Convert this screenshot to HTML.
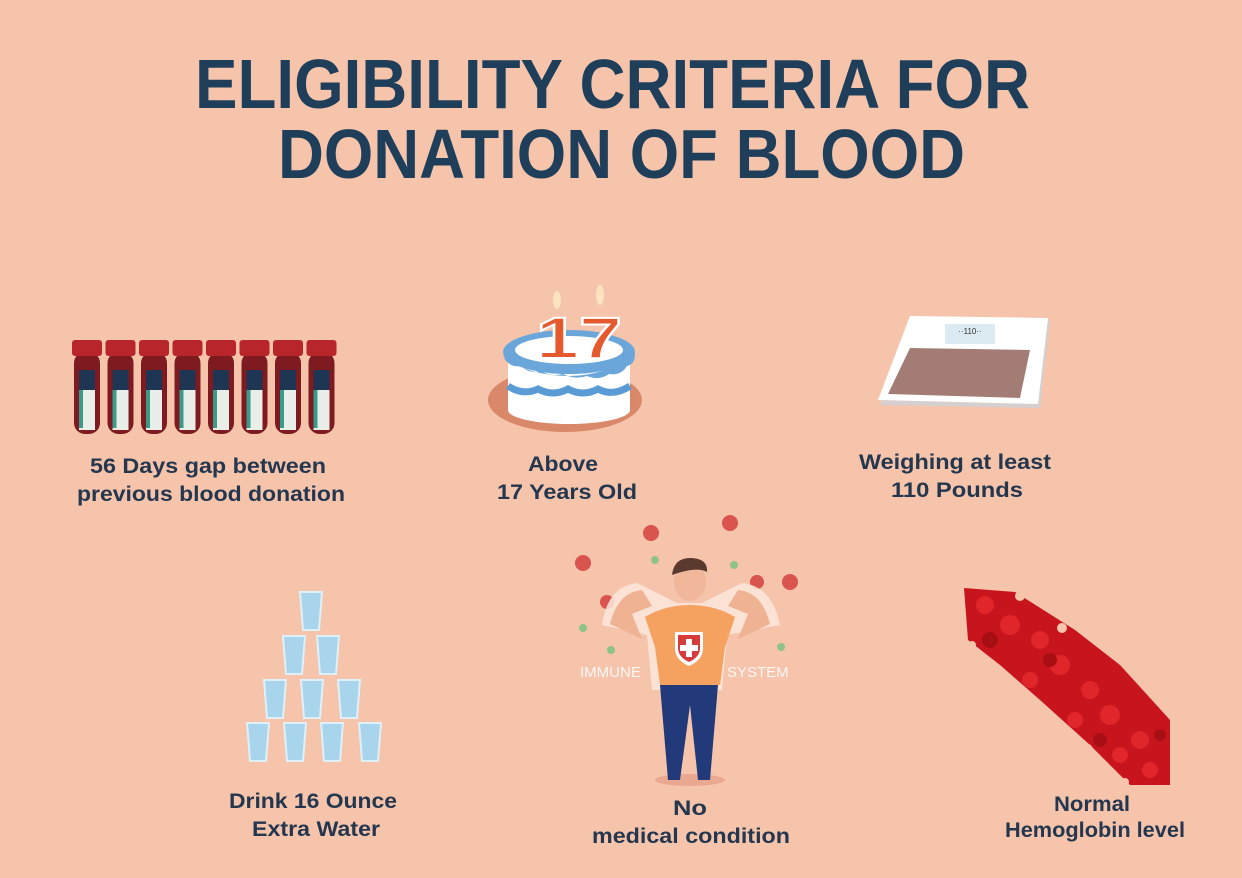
<!DOCTYPE html>
<html><head><meta charset="utf-8"><style>
html,body{margin:0;padding:0;background:#f5c4ab;}
svg{display:block}
.t{font-family:"Liberation Sans",sans-serif;font-weight:bold;fill:#1f3e5a}
.l{font-family:"Liberation Sans",sans-serif;font-weight:bold;fill:#24374f;font-size:21px}
</style></head><body>
<svg width="1242" height="878" viewBox="0 0 1242 878" xmlns="http://www.w3.org/2000/svg">
<rect width="1242" height="878" fill="#f5c4ab"/>
<text class="t" x="195" y="108" font-size="70" textLength="835" lengthAdjust="spacingAndGlyphs">ELIGIBILITY CRITERIA FOR</text>
<text class="t" x="278" y="178" font-size="70" textLength="687" lengthAdjust="spacingAndGlyphs">DONATION OF BLOOD</text>

<g id="tubes">
<g transform="translate(72,0)"><rect x="2" y="352" width="26" height="82" rx="11" fill="#7e1b20"/><rect x="0" y="340" width="30" height="16" rx="3" fill="#b8262b"/><rect x="7" y="370" width="16" height="60" fill="#e9eee8"/><rect x="7" y="370" width="16" height="20" fill="#1e3554"/><rect x="7" y="390" width="4" height="38" fill="#3a9b88"/></g>
<g transform="translate(105.5,0)"><rect x="2" y="352" width="26" height="82" rx="11" fill="#7e1b20"/><rect x="0" y="340" width="30" height="16" rx="3" fill="#b8262b"/><rect x="7" y="370" width="16" height="60" fill="#e9eee8"/><rect x="7" y="370" width="16" height="20" fill="#1e3554"/><rect x="7" y="390" width="4" height="38" fill="#3a9b88"/></g>
<g transform="translate(139,0)"><rect x="2" y="352" width="26" height="82" rx="11" fill="#7e1b20"/><rect x="0" y="340" width="30" height="16" rx="3" fill="#b8262b"/><rect x="7" y="370" width="16" height="60" fill="#e9eee8"/><rect x="7" y="370" width="16" height="20" fill="#1e3554"/><rect x="7" y="390" width="4" height="38" fill="#3a9b88"/></g>
<g transform="translate(172.5,0)"><rect x="2" y="352" width="26" height="82" rx="11" fill="#7e1b20"/><rect x="0" y="340" width="30" height="16" rx="3" fill="#b8262b"/><rect x="7" y="370" width="16" height="60" fill="#e9eee8"/><rect x="7" y="370" width="16" height="20" fill="#1e3554"/><rect x="7" y="390" width="4" height="38" fill="#3a9b88"/></g>
<g transform="translate(206,0)"><rect x="2" y="352" width="26" height="82" rx="11" fill="#7e1b20"/><rect x="0" y="340" width="30" height="16" rx="3" fill="#b8262b"/><rect x="7" y="370" width="16" height="60" fill="#e9eee8"/><rect x="7" y="370" width="16" height="20" fill="#1e3554"/><rect x="7" y="390" width="4" height="38" fill="#3a9b88"/></g>
<g transform="translate(239.5,0)"><rect x="2" y="352" width="26" height="82" rx="11" fill="#7e1b20"/><rect x="0" y="340" width="30" height="16" rx="3" fill="#b8262b"/><rect x="7" y="370" width="16" height="60" fill="#e9eee8"/><rect x="7" y="370" width="16" height="20" fill="#1e3554"/><rect x="7" y="390" width="4" height="38" fill="#3a9b88"/></g>
<g transform="translate(273,0)"><rect x="2" y="352" width="26" height="82" rx="11" fill="#7e1b20"/><rect x="0" y="340" width="30" height="16" rx="3" fill="#b8262b"/><rect x="7" y="370" width="16" height="60" fill="#e9eee8"/><rect x="7" y="370" width="16" height="20" fill="#1e3554"/><rect x="7" y="390" width="4" height="38" fill="#3a9b88"/></g>
<g transform="translate(306.5,0)"><rect x="2" y="352" width="26" height="82" rx="11" fill="#7e1b20"/><rect x="0" y="340" width="30" height="16" rx="3" fill="#b8262b"/><rect x="7" y="370" width="16" height="60" fill="#e9eee8"/><rect x="7" y="370" width="16" height="20" fill="#1e3554"/><rect x="7" y="390" width="4" height="38" fill="#3a9b88"/></g>
</g>
<text class="l" x="208" y="473" text-anchor="middle" textLength="236" lengthAdjust="spacingAndGlyphs">56 Days gap between</text>
<text class="l" x="211" y="501" text-anchor="middle" textLength="268" lengthAdjust="spacingAndGlyphs">previous blood donation</text>

<!-- cake -->
<ellipse cx="565" cy="400" rx="77" ry="32" fill="#d9896a"/>
<rect x="508" y="352" width="122" height="58" fill="#fff"/>
<ellipse cx="569" cy="410" rx="61" ry="14" fill="#fff"/>
<ellipse cx="569" cy="352" rx="66" ry="22" fill="#6aa6da"/>
<ellipse cx="569" cy="350" rx="54" ry="14" fill="#fff"/>
<text x="536" y="358" font-family="Liberation Sans,sans-serif" font-weight="bold" font-size="58" fill="#e45a2e" stroke="#fff" stroke-width="2" textLength="86" lengthAdjust="spacingAndGlyphs">17</text>
<path d="M503 356 q6 12 18 10 q8 8 20 5 q10 6 22 3 q12 6 24 2 q12 5 22 -2 q12 2 18 -8 q8 -2 8 -12 q-30 22 -66 22 q-40 0 -66 -20z" fill="#6aa6da"/>
<path d="M508 386 q15 10 30 3 q15 8 30 0 q15 8 30 0 q15 8 32 -3" stroke="#5b9bd5" stroke-width="7" fill="none"/>
<ellipse cx="557" cy="300" rx="4" ry="9" fill="#fbe3c0"/>
<ellipse cx="600" cy="295" rx="4" ry="10" fill="#fbe3c0"/>
<text class="l" x="563" y="471" text-anchor="middle" textLength="70" lengthAdjust="spacingAndGlyphs">Above</text>
<text class="l" x="567" y="499" text-anchor="middle" textLength="140" lengthAdjust="spacingAndGlyphs">17 Years Old</text>

<!-- scale -->
<polygon points="912,318 1050,320 1040,408 880,405" fill="#d6cfcf"/>
<polygon points="910,316 1048,318 1038,404 878,400" fill="#fff"/>
<rect x="945" y="324" width="50" height="20" fill="#dcebf2"/>
<text x="970" y="334" font-size="8" text-anchor="middle" fill="#333" font-family="Liberation Sans,sans-serif">··110··</text>
<polygon points="910,348 1030,350 1020,398 888,394" fill="#a37c75"/>
<text class="l" x="955" y="469" text-anchor="middle" textLength="192" lengthAdjust="spacingAndGlyphs">Weighing at least</text>
<text class="l" x="957" y="497" text-anchor="middle" textLength="132" lengthAdjust="spacingAndGlyphs">110 Pounds</text>

<!-- glasses -->
<g fill="#a8d5ec" stroke="#dff0f8" stroke-width="2">
<path d="M300 592 h22 l-3 38 h-16z"/>
<path d="M283 636 h22 l-3 38 h-16z"/><path d="M317 636 h22 l-3 38 h-16z"/>
<path d="M264 680 h22 l-3 38 h-16z"/><path d="M301 680 h22 l-3 38 h-16z"/><path d="M338 680 h22 l-3 38 h-16z"/>
<path d="M247 723 h22 l-3 38 h-16z"/><path d="M284 723 h22 l-3 38 h-16z"/><path d="M321 723 h22 l-3 38 h-16z"/><path d="M359 723 h22 l-3 38 h-16z"/>
</g>
<text class="l" x="313" y="808" text-anchor="middle" textLength="168" lengthAdjust="spacingAndGlyphs">Drink 16 Ounce</text>
<text class="l" x="316" y="836" text-anchor="middle" textLength="128" lengthAdjust="spacingAndGlyphs">Extra Water</text>

<!-- man -->
<g fill="#d9534f">
<circle cx="651" cy="533" r="8"/><circle cx="730" cy="523" r="8"/><circle cx="583" cy="563" r="8"/><circle cx="790" cy="582" r="8"/><circle cx="607" cy="602" r="7"/><circle cx="757" cy="582" r="7"/>
</g>
<g fill="#8fc28a"><circle cx="655" cy="560" r="4"/><circle cx="734" cy="565" r="4"/><circle cx="583" cy="628" r="4"/><circle cx="781" cy="647" r="4"/><circle cx="611" cy="650" r="4"/></g>
<ellipse cx="690" cy="780" rx="35" ry="6" fill="#eaa890"/>
<path d="M602 625 q5 -38 35 -42 l40 20 l25 0 l40 -20 q30 3 38 42 l-53 10 l-5 55 h-70 l-5 -55z" fill="#fde8dc" opacity="0.85"/>
<path d="M610 624 q8 -32 32 -34 l10 16 l-20 8 l10 25z" fill="#efb393"/>
<path d="M770 624 q-8 -32 -32 -34 l-10 16 l20 8 l-10 25z" fill="#efb393"/>
<path d="M645 617 q20 -12 45 -12 q25 0 45 12 l-10 30 l-5 38 h-60 l-5 -38z" fill="#f5a261"/>
<path d="M675 632 h28 v16 q0 12 -14 18 q-14 -6 -14 -18z" fill="#fff"/>
<path d="M678 635 h22 v13 q0 9 -11 14 q-11 -5 -11 -14z" fill="#d63c3c"/>
<rect x="686" y="639" width="6" height="18" fill="#fff"/><rect x="680" y="645" width="18" height="6" fill="#fff"/>
<ellipse cx="690" cy="582" rx="16" ry="19" fill="#f0b79a"/>
<path d="M672 575 q2 -18 20 -17 q16 1 15 14 q-10 -6 -35 3z" fill="#5a3a2e"/>
<path d="M660 685 h58 l-8 95 h-12 l-8 -75 l-10 75 h-12z" fill="#233a7a"/>
<text x="580" y="677" font-family="Liberation Sans,sans-serif" font-size="15" fill="#fff" opacity="0.85">IMMUNE</text>
<text x="727" y="677" font-family="Liberation Sans,sans-serif" font-size="15" fill="#fff" opacity="0.85">SYSTEM</text>
<text class="l" x="690" y="815" text-anchor="middle" textLength="34" lengthAdjust="spacingAndGlyphs">No</text>
<text class="l" x="691" y="843" text-anchor="middle" textLength="198" lengthAdjust="spacingAndGlyphs">medical condition</text>

<!-- blood cells -->
<polygon points="964,588 1015,592 1075,630 1120,665 1170,720 1170,785 1130,785 1090,745 1040,700 1000,665 968,640" fill="#c8141c"/>
<g fill="#e0252b">
<circle cx="985" cy="605" r="9"/><circle cx="1010" cy="625" r="10"/><circle cx="1040" cy="640" r="9"/><circle cx="1060" cy="665" r="10"/><circle cx="1090" cy="690" r="9"/><circle cx="1110" cy="715" r="10"/><circle cx="1140" cy="740" r="9"/><circle cx="1150" cy="770" r="8"/><circle cx="1030" cy="680" r="8"/><circle cx="1075" cy="720" r="8"/><circle cx="1120" cy="755" r="8"/>
</g>
<g fill="#a80f15"><circle cx="990" cy="640" r="8"/><circle cx="1050" cy="660" r="7"/><circle cx="1100" cy="740" r="7"/><circle cx="1160" cy="735" r="6"/></g>
<g fill="#f5c4ab"><circle cx="1020" cy="596" r="5"/><circle cx="1062" cy="628" r="5"/><circle cx="972" cy="645" r="4"/><circle cx="1088" cy="748" r="4"/><circle cx="1125" cy="782" r="4"/></g>
<text class="l" x="1092" y="811" text-anchor="middle" textLength="76" lengthAdjust="spacingAndGlyphs">Normal</text>
<text class="l" x="1095" y="837" text-anchor="middle" textLength="180" lengthAdjust="spacingAndGlyphs">Hemoglobin level</text>
</svg>
</body></html>
